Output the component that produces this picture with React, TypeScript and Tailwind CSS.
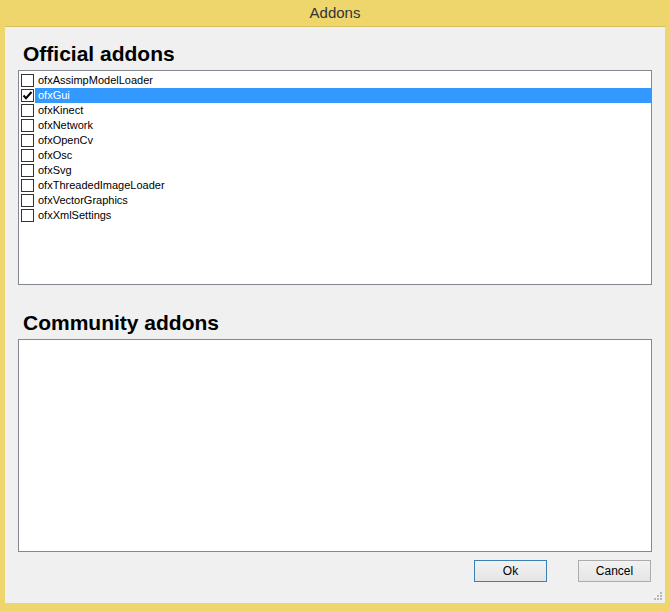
import React from 'react'

const official = [
  'ofxAssimpModelLoader',
  'ofxGui',
  'ofxKinect',
  'ofxNetwork',
  'ofxOpenCv',
  'ofxOsc',
  'ofxSvg',
  'ofxThreadedImageLoader',
  'ofxVectorGraphics',
  'ofxXmlSettings',
]

const checked = ['ofxGui']
const selected = 'ofxGui'

function CheckBox({ on }: { on: boolean }) {
  return (
    <div className="w-[13px] h-[13px] border border-[#333333] bg-white flex items-center justify-center shrink-0">
      {on && (
        <svg width="11" height="11" viewBox="0 0 11 11">
          <path d="M1.5 5.5 L4 8.2 L9.5 2" fill="none" stroke="#000" strokeWidth="2" />
        </svg>
      )}
    </div>
  )
}

function Grip() {
  const dots = [
    [8, 0],
    [8, 3], [5, 3],
    [8, 6], [5, 6], [2, 6],
  ]
  return (
    <svg className="absolute right-[2px] bottom-[2px]" width="11" height="9" viewBox="0 0 11 9">
      {dots.map(([x, y], i) => (
        <rect key={i} x={x} y={y} width="2" height="2" fill="#b8b8b8" />
      ))}
    </svg>
  )
}

export default function App() {
  return (
    <div
      className="w-[670px] h-[611px] bg-[#efd66c] flex flex-col"
      style={{ fontFamily: '"Liberation Sans", Arial, sans-serif' }}
    >
      {/* Title bar */}
      <div className="h-[26px] flex items-center justify-center text-[15px] text-[#333333]">
        Addons
      </div>

      {/* Client area */}
      <div className="relative flex-1 mx-[5px] mb-[8px] bg-[#f0f0f0] border-t border-[#d6bf5e] px-[13px] pt-[15px] flex flex-col">
        <h2 className="h-[24px] leading-[24px] text-[21px] font-bold text-black pl-[5px] mb-[4px]">
          Official addons
        </h2>
        <div className="h-[215px] border border-[#828790] bg-white pt-[2px]">
          {official.map(name => {
            const isSel = name === selected
            return (
              <div key={name} className="h-[15px] flex items-center pl-[2px]">
                <CheckBox on={checked.includes(name)} />
                <div
                  className={
                    'ml-[1px] flex-1 h-[15px] leading-[15px] pl-[3px] text-[11px] ' +
                    (isSel ? 'bg-[#3399ff] text-white' : 'text-black')
                  }
                >
                  {name}
                </div>
              </div>
            )
          })}
        </div>

        <h2 className="mt-[26px] h-[24px] leading-[24px] text-[21px] font-bold text-black pl-[5px] mb-[4px]">
          Community addons
        </h2>
        <div className="h-[213px] border border-[#828790] bg-white" />

        <div className="mt-[8px] mr-[1px] flex justify-end gap-[31px]">
          <button className="w-[73px] h-[22px] border border-[#3c7fb1] bg-gradient-to-b from-[#f2f2f2] to-[#e5e5e5] text-[12px] text-black">
            Ok
          </button>
          <button className="w-[73px] h-[22px] border border-[#acacac] bg-gradient-to-b from-[#f2f2f2] to-[#e5e5e5] text-[12px] text-black">
            Cancel
          </button>
        </div>
        <Grip />
      </div>
    </div>
  )
}
